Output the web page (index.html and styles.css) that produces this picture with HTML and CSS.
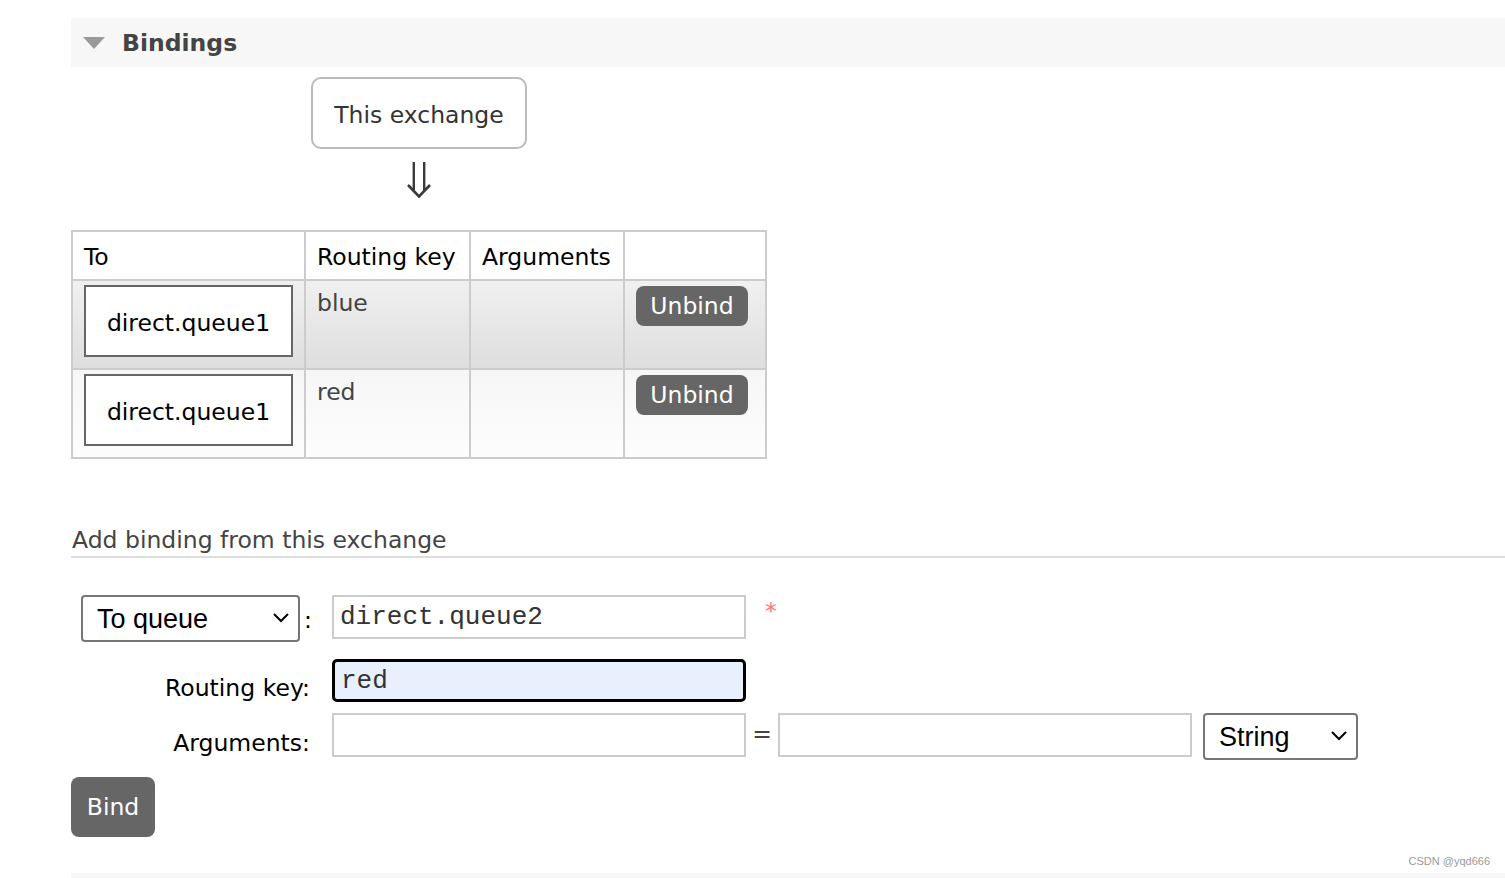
FILE: index.html
```html
<!DOCTYPE html>
<html>
<head>
<meta charset="utf-8">
<link rel="stylesheet" href="styles.css">
</head>
<body>
<div class="page">
  <div class="section-head">
    <span class="tri"></span>
    <h2 class="section-title">Bindings</h2>
  </div>

  <div class="diagram">
    <div class="this-box">This exchange</div>
    <svg class="arrow" width="24" height="36" viewBox="0 0 24 36">
      <path d="M6.8 0 V28 M17.2 0 V28" stroke="#3a3a3a" stroke-width="2.4" fill="none"/>
      <path d="M1 23 L12 34.5 L23 23" stroke="#3a3a3a" stroke-width="2.6" fill="none"/>
    </svg>
  </div>

  <table class="bindings">
    <colgroup>
      <col class="c1"><col class="c2"><col class="c3"><col class="c4">
    </colgroup>
    <thead>
      <tr><th>To</th><th>Routing key</th><th>Arguments</th><th></th></tr>
    </thead>
    <tbody>
      <tr class="alt1">
        <td><span class="qbox">direct.queue1</span></td>
        <td class="txt">blue</td>
        <td></td>
        <td><button class="btn unbind">Unbind</button></td>
      </tr>
      <tr class="alt2">
        <td><span class="qbox">direct.queue1</span></td>
        <td class="txt">red</td>
        <td></td>
        <td><button class="btn unbind">Unbind</button></td>
      </tr>
    </tbody>
  </table>

  <h3 class="sub-title">Add binding from this exchange</h3>

  <div class="form">
    <div class="frow r1">
      <div class="flabel sel-label">
        <span class="sel-wrap sel-dest">
          <select class="sel"><option>To queue</option></select>
          <svg class="chev" width="16" height="10" viewBox="0 0 16 10"><path d="M1 1 L8 8 L15 1" stroke="#000" stroke-width="2" fill="none"/></svg>
        </span><span class="colon">:</span>
      </div>
      <input class="inp" type="text" value="direct.queue2">
      <span class="req">*</span>
    </div>
    <div class="frow r2">
      <div class="flabel">Routing key:</div>
      <input class="inp focus" type="text" value="red">
    </div>
    <div class="frow r3">
      <div class="flabel">Arguments:</div>
      <input class="inp" type="text" value="">
      <span class="eq">=</span>
      <input class="inp" type="text" value="">
      <span class="sel-wrap sel-type">
        <select class="sel"><option>String</option></select>
        <svg class="chev" width="16" height="10" viewBox="0 0 16 10"><path d="M1 1 L8 8 L15 1" stroke="#000" stroke-width="2" fill="none"/></svg>
      </span>
    </div>
    <button class="btn bind">Bind</button>
  </div>

  <div class="next-section"></div>
</div>
<div class="watermark">CSDN @yqd666</div>
</body>
</html>
```

FILE: styles.css
```css
html, body {
  margin: 0;
  padding: 0;
  background: #fff;
}
body {
  font-family: "DejaVu Sans", Verdana, sans-serif;
  font-size: 23.5px;
  color: #000;
  position: relative;
  height: 878px;
  overflow: hidden;
}
.page {
  padding: 18px 0 0 71px;
}
.section-head {
  display: flex;
  align-items: center;
  height: 49px;
  background: #f7f7f7;
}
.tri {
  width: 0;
  height: 0;
  margin-left: 12px;
  border-left: 11px solid transparent;
  border-right: 11px solid transparent;
  border-top: 12px solid #9a9a9a;
}
.section-title {
  margin: 0 0 0 17px;
  font-size: 23.5px;
  font-weight: bold;
  color: #444;
}
.diagram {
  display: flex;
  flex-direction: column;
  align-items: center;
  width: 694px;
  padding-top: 10px;
}
.this-box {
  box-sizing: border-box;
  width: 216px;
  height: 72px;
  padding-top: 3px;
  border: 2px solid #bbb;
  border-radius: 10px;
  display: flex;
  align-items: center;
  justify-content: center;
  color: #333;
  margin-left: 2px;
}
.arrow {
  display: block;
  margin-top: 13px;
  margin-left: 2px;
}
.bindings {
  margin-top: 32px;
  border-collapse: collapse;
  table-layout: fixed;
  width: 694px;
}
.c1 { width: 233px; }
.c2 { width: 165px; }
.c3 { width: 154px; }
.c4 { width: 142px; }
.bindings th, .bindings td {
  border: 2px solid #ccc;
  text-align: left;
  vertical-align: top;
}
.bindings th {
  font-weight: normal;
  padding: 12px 11px 8px 11px;
  line-height: 27px;
  height: 27px;
}
.bindings td {
  padding: 4px 11px 11px 11px;
  height: 72px;
}
.bindings td.txt {
  color: #444;
  padding-top: 8px;
  height: 68px;
}
.alt1 td {
  background: linear-gradient(#f0f0f0, #dedede);
}
.alt2 td {
  background: linear-gradient(#f6f6f6, #fdfdfd);
}
.qbox {
  box-sizing: border-box;
  display: flex;
  align-items: center;
  justify-content: center;
  height: 72px;
  padding-top: 3px;
  border: 2px solid #666;
  background: #fff;
  color: #000;
}
.btn {
  font-family: "DejaVu Sans", Verdana, sans-serif;
  font-size: 23.5px;
  color: #fff;
  background: #666;
  border: none;
  border-radius: 8px;
  padding: 0;
  cursor: pointer;
}
.unbind {
  width: 112px;
  height: 40px;
  margin-top: 1px;
}
.sub-title {
  margin: 68px 0 0 0;
  font-size: 23.5px;
  font-weight: normal;
  color: #444;
  line-height: 27px;
  padding-bottom: 2px;
  border-bottom: 2px solid #ddd;
  padding-left: 1px;
}
.form {
  padding-top: 37px;
}
.frow {
  display: flex;
  align-items: flex-start;
}
.flabel {
  width: 239px;
  padding-right: 22px;
  text-align: right;
  flex: none;
  line-height: 27px;
}
.r2 { margin-top: 17px; }
.r3 { margin-top: 11px; }
.r2 .flabel { padding-top: 16px; }
.r3 .flabel { padding-top: 17px; }
.sel-label {
  display: flex;
  align-items: flex-start;
  justify-content: flex-start;
  padding-left: 10px;
  width: 229px;
}
.colon {
  padding-top: 12px;
  margin-left: 4px;
}
.sel-wrap {
  position: relative;
  display: inline-block;
}
.sel {
  -webkit-appearance: none;
  appearance: none;
  font-family: "Liberation Sans", Arial, sans-serif;
  font-size: 27px;
  color: #000;
  background: #fff;
  border: 2px solid #767676;
  border-radius: 4px;
  height: 47px;
  padding: 0 0 0 14px;
  margin: 0;
  display: block;
}
.sel-dest .sel { width: 219px; }
.sel-type .sel { width: 155px; padding-left: 14px; }
.chev {
  position: absolute;
  top: 18px;
  pointer-events: none;
}
.sel-dest .chev { left: 192px; }
.sel-type .chev { left: 128px; }
.sel-type { margin-left: 11px; }
.inp {
  box-sizing: border-box;
  width: 414px;
  height: 44px;
  border: 2px solid #ccc;
  padding: 0 6px;
  margin: 0;
  font-family: "Liberation Mono", "Courier New", monospace;
  font-size: 26px;
  color: #333;
  background: #fff;
  outline: none;
  flex: none;
}
.inp.focus {
  height: 43px;
  border: 3px solid #000;
  border-radius: 5px;
  background: #e8f0fe;
}
.req {
  color: #f77;
  margin-left: 19px;
  margin-top: 2px;
  font-size: 23.5px;
}
.eq {
  width: 32px;
  text-align: center;
  flex: none;
  padding-top: 7px;
  color: #444;
}
.bind {
  display: block;
  margin-top: 17px;
  width: 84px;
  height: 60px;
}
.next-section {
  margin-top: 36px;
  height: 20px;
  background: #f7f7f7;
}
.watermark {
  position: absolute;
  right: 15px;
  top: 855px;
  font-family: "Liberation Sans", Arial, sans-serif;
  font-size: 11px;
  color: #999;
}
```
